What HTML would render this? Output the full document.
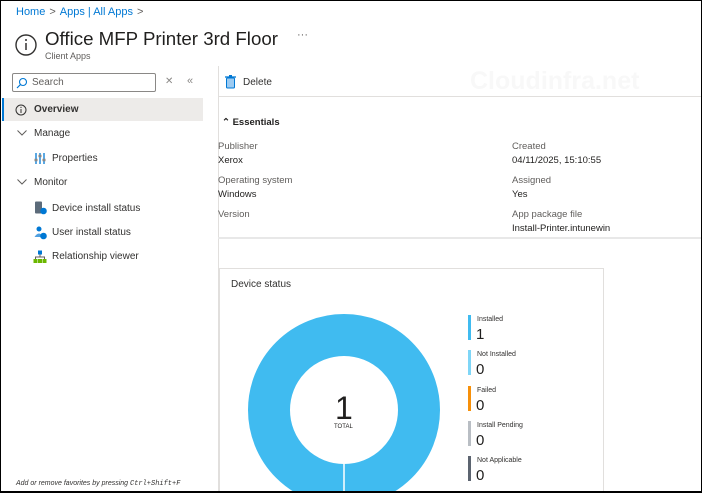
<!DOCTYPE html>
<html><head><style>
*{margin:0;padding:0;box-sizing:border-box}
html,body{width:702px;height:493px;overflow:hidden;background:#fff}
body{font-family:"Liberation Sans",sans-serif;color:#323130}
#w{position:relative;width:702px;height:493px;overflow:hidden}
.frame{position:absolute;left:0;top:0;width:702px;height:493px;border:1px solid #000;border-bottom-width:2px;pointer-events:none;z-index:10}
.a{position:absolute;white-space:nowrap}
.bc{left:16px;top:6px;font-size:11px;color:#0078d4}
.bc span{color:#605e5c;margin:0 4px}
.title{left:45px;top:28px;font-size:18.7px;color:#201f1e}
.sub{left:45px;top:51px;font-size:9px;color:#605e5c}
.nav{font-size:10px;color:#323130}
.lbl{font-size:9.5px;color:#605e5c}
.val{font-size:9.5px;color:#201f1e}
.leg{position:absolute;left:468px;width:3px;height:25px}
.lt{position:absolute;left:477px;font-size:7px;color:#323130}
.ln{position:absolute;left:476px;font-size:15px;color:#201f1e}
</style></head><body><div id="w">
<div class="a bc">Home<span>&gt;</span>Apps | All Apps<span>&gt;</span></div>
<svg class="a" style="left:14px;top:33px" width="24" height="24"><circle cx="12" cy="12" r="10" fill="none" stroke="#323130" stroke-width="1.4"/><line x1="12" y1="10" x2="12" y2="17" stroke="#323130" stroke-width="1.5"/><circle cx="12" cy="7" r="1" fill="#323130"/></svg>
<div class="a title">Office MFP Printer 3rd Floor</div>
<div class="a" style="left:297px;top:29px;font-size:11px;color:#605e5c">···</div>
<div class="a sub">Client Apps</div>
<div class="a" style="left:12px;top:73px;width:144px;height:19px;border:1px solid #8a8886;border-radius:2px"></div>
<svg class="a" style="left:16px;top:77px" width="12" height="12"><circle cx="7" cy="5" r="3.5" fill="none" stroke="#0078d4" stroke-width="1.1"/><line x1="4.5" y1="7.5" x2="1" y2="11" stroke="#0078d4" stroke-width="1.2"/></svg>
<div class="a" style="left:32px;top:77px;font-size:10px;color:#605e5c">Search</div>
<div class="a" style="left:165px;top:76px;font-size:10px;color:#8a8886">✕</div>
<div class="a" style="left:187px;top:75px;font-size:11px;color:#8a8886">«</div>
<div class="a" style="left:2px;top:98px;width:201px;height:23px;background:#edebe9;border-left:2px solid #0078d4"></div>
<svg class="a" style="left:15px;top:104px" width="12" height="12"><circle cx="6" cy="6" r="5" fill="none" stroke="#323130"/><line x1="6" y1="5" x2="6" y2="9" stroke="#323130"/><circle cx="6" cy="3.4" r=".6" fill="#323130"/></svg>
<div class="a nav" style="left:34px;top:104px;font-weight:bold">Overview</div>
<svg class="a" style="left:17px;top:130px" width="10" height="6"><path d="M0.5 0.5L5 5L9.5 0.5" fill="none" stroke="#605e5c"/></svg>
<div class="a nav" style="left:34px;top:128px">Manage</div>
<svg class="a" style="left:34px;top:152px" width="12" height="13"><g stroke="#0078d4" stroke-width="1.3"><line x1="2" y1="1" x2="2" y2="12"/><line x1="6" y1="1" x2="6" y2="12"/><line x1="10" y1="1" x2="10" y2="12"/></g><g stroke="#8a8886" stroke-width="2.5"><line x1="0.5" y1="8" x2="3.5" y2="8"/><line x1="4.5" y1="4" x2="7.5" y2="4"/><line x1="8.5" y1="8" x2="11.5" y2="8"/></g></svg>
<div class="a nav" style="left:52px;top:153px">Properties</div>
<svg class="a" style="left:17px;top:179px" width="10" height="6"><path d="M0.5 0.5L5 5L9.5 0.5" fill="none" stroke="#605e5c"/></svg>
<div class="a nav" style="left:34px;top:177px">Monitor</div>
<svg class="a" style="left:34px;top:201px" width="13" height="14"><rect x="1" y="0.5" width="7" height="12" rx="1" fill="#5c6b7a"/><circle cx="9.5" cy="10" r="3.3" fill="#0078d4"/></svg>
<div class="a nav" style="left:52px;top:203px">Device install status</div>
<svg class="a" style="left:34px;top:226px" width="13" height="14"><circle cx="5" cy="3" r="2.5" fill="#0078d4"/><path d="M0.5 11 Q5 4 9.5 11Z" fill="#50a0e0"/><circle cx="9.5" cy="10" r="3.3" fill="#0078d4"/></svg>
<div class="a nav" style="left:52px;top:227px">User install status</div>
<svg class="a" style="left:33px;top:250px" width="14" height="14"><rect x="5" y="0.5" width="4" height="4" fill="#0078d4"/><path d="M7 4.5V7M2.5 9V7H11.5V9" stroke="#605e5c" fill="none"/><rect x="0.5" y="9" width="4" height="4" fill="#6bb700"/><rect x="5" y="9" width="4" height="4" fill="#6bb700"/><rect x="9.5" y="9" width="4" height="4" fill="#6bb700"/></svg>
<div class="a nav" style="left:52px;top:251px">Relationship viewer</div>
<div class="a" style="left:16px;top:480px;font-size:7px;font-style:italic;color:#323130">Add or remove favorites by pressing <span style="font-family:'Liberation Mono',monospace">Ctrl+Shift+F</span></div>
<div class="a" style="left:218px;top:66px;width:1px;height:427px;background:#e1dfdd"></div>
<svg class="a" style="left:225px;top:75px" width="11" height="14"><rect x="1.5" y="3" width="8" height="10" rx="1" fill="#9ccbf2" stroke="#0078d4"/><line x1="0" y1="2" x2="11" y2="2" stroke="#0078d4" stroke-width="1.3"/><rect x="4" y="0" width="3" height="2" fill="#0078d4"/></svg>
<div class="a" style="left:243px;top:77px;font-size:10px">Delete</div>
<div class="a" style="left:470px;top:67px;font-size:25px;font-weight:bold;color:#f8f8f8">Cloudinfra.net</div>
<div class="a" style="left:218px;top:96px;width:484px;height:1px;background:#e1dfdd"></div>
<div class="a" style="left:222px;top:117px;font-size:9.5px;font-weight:bold;color:#201f1e">⌃ Essentials</div>
<div class="a lbl" style="left:218px;top:141px">Publisher</div>
<div class="a val" style="left:218px;top:155px">Xerox</div>
<div class="a lbl" style="left:218px;top:175px">Operating system</div>
<div class="a val" style="left:218px;top:189px">Windows</div>
<div class="a lbl" style="left:218px;top:209px">Version</div>
<div class="a lbl" style="left:512px;top:141px">Created</div>
<div class="a val" style="left:512px;top:155px">04/11/2025, 15:10:55</div>
<div class="a lbl" style="left:512px;top:175px">Assigned</div>
<div class="a val" style="left:512px;top:189px">Yes</div>
<div class="a lbl" style="left:512px;top:209px">App package file</div>
<div class="a val" style="left:512px;top:223px">Install-Printer.intunewin</div>
<div class="a" style="left:218px;top:237px;width:484px;height:2px;background:#e8e8e8"></div>
<div class="a" style="left:219px;top:268px;width:385px;height:230px;border:1px solid #e1dfdd"></div>
<div class="a" style="left:231px;top:279px;font-size:10px">Device status</div>
<svg class="a" style="left:248px;top:314px" width="192" height="192"><circle cx="96" cy="96" r="75" fill="none" stroke="#40bbf0" stroke-width="42"/><line x1="96" y1="150" x2="96" y2="192" stroke="#fff" stroke-width="1.5"/></svg>
<div class="a" style="left:335px;top:390px;font-size:32px;color:#201f1e">1</div>
<div class="a" style="left:334px;top:424px;font-size:6px;color:#201f1e">TOTAL</div>
<div class="leg" style="top:315px;background:#40bbf0"></div><div class="lt" style="top:316px">Installed</div><div class="ln" style="top:326px">1</div>
<div class="leg" style="top:350px;background:#7fd6f7"></div><div class="lt" style="top:351px">Not Installed</div><div class="ln" style="top:361px">0</div>
<div class="leg" style="top:386px;background:#f7900a"></div><div class="lt" style="top:387px">Failed</div><div class="ln" style="top:397px">0</div>
<div class="leg" style="top:421px;background:#b9bec4"></div><div class="lt" style="top:422px">Install Pending</div><div class="ln" style="top:432px">0</div>
<div class="leg" style="top:456px;background:#5c6470"></div><div class="lt" style="top:457px">Not Applicable</div><div class="ln" style="top:467px">0</div>
<div class="frame"></div>
</div></body></html>
